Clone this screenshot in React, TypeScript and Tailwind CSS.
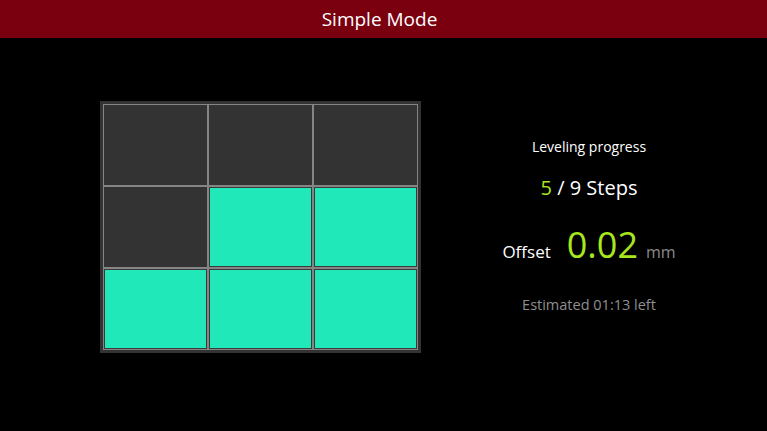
const cells = [false, false, false, false, true, true, true, true, true];

const font = { fontFamily: '"Open Sans", "DejaVu Sans", sans-serif' };

export default function App() {
  return (
    <div className="w-[767px] h-[431px] bg-black overflow-hidden" style={font}>
      <div className="h-[38px] bg-[#7a000f] flex items-center justify-center pr-[8px] text-white text-[19px]">
        Simple Mode
      </div>

      <div className="flex pl-[100px] pt-[63px]">
        <div className="w-[321px] h-[252px] bg-[#333333] p-[3px]">
          <div className="w-full h-full bg-[#858585] p-[1px] grid grid-cols-3 grid-rows-3 gap-[2px]">
            {cells.map((on, i) =>
              on ? (
                <div key={i} className="bg-[#20e8b8] border border-[#3a3a3a]" />
              ) : (
                <div key={i} className="bg-[#333333]" />
              )
            )}
          </div>
        </div>

        <div className="w-[336px] flex flex-col items-center pt-[36px]">
          <div className="text-white text-[14px] leading-[20px]">Leveling progress</div>
          <div className="mt-[18px] text-white text-[20px] leading-[26px]">
            <span className="text-[#a8e61d]">5</span> / 9 Steps
          </div>
          <div className="mt-[22px] flex items-baseline">
            <span className="text-white text-[17px]">Offset</span>
            <span className="ml-[16px] text-[#a8e61d] text-[36px] leading-[44px]">0.02</span>
            <span className="ml-[8px] text-[#8a8a8a] text-[16px]">mm</span>
          </div>
          <div className="mt-[28px] text-[#8f8f8f] text-[14.5px] leading-[20px]">Estimated 01:13 left</div>
        </div>
      </div>
    </div>
  );
}
